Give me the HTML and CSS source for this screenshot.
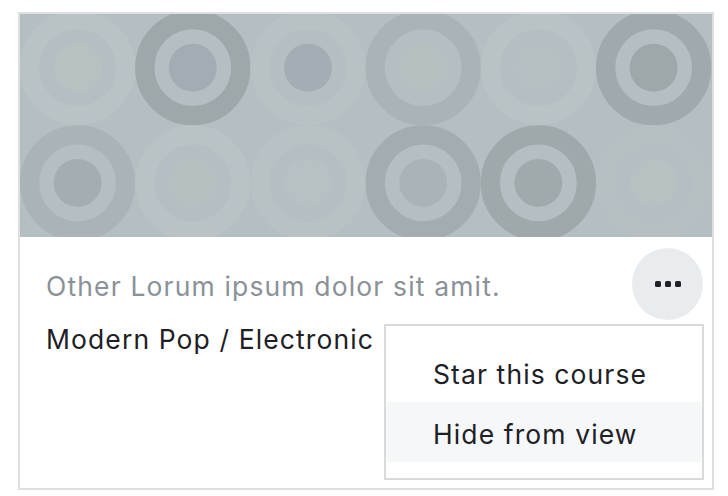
FILE: index.html
```html
<!DOCTYPE html>
<html lang="en">
<head>
<meta charset="utf-8">
<title>Course card</title>
<link rel="stylesheet" href="styles.css">
</head>
<body>
<div class="card">
  <svg class="card-img" viewBox="0 0 692 223" width="692" height="223" aria-hidden="true">
    <rect width="692" height="223" fill="#b4bfc3"/>
    <g fill="none" stroke-width="19.2">
      <circle cx="57.6" cy="53.7" r="48" stroke="#b9c2c5"/>
      <circle cx="172.8" cy="53.7" r="48" stroke="#9ea8ab"/>
      <circle cx="288" cy="53.7" r="48" stroke="#b8c1c4"/>
      <circle cx="403.2" cy="53.7" r="48" stroke="#aab4b8"/>
      <circle cx="518.4" cy="53.7" r="48" stroke="#b9c2c4"/>
      <circle cx="633.6" cy="53.7" r="48" stroke="#a0a9ad"/>
      <circle cx="57.6" cy="168.9" r="48" stroke="#aab4b8"/>
      <circle cx="172.8" cy="168.9" r="48" stroke="#b9c2c5"/>
      <circle cx="288" cy="168.9" r="48" stroke="#b8c1c4"/>
      <circle cx="403.2" cy="168.9" r="48" stroke="#a3acb0"/>
      <circle cx="518.4" cy="168.9" r="48" stroke="#9fa9ac"/>
      <circle cx="633.6" cy="168.9" r="48" stroke="#b6c0c3"/>
    </g>
    <g>
      <circle cx="57.6" cy="53.7" r="24" fill="#b8c1c2"/>
      <circle cx="172.8" cy="53.7" r="24" fill="#a3acb2"/>
      <circle cx="288" cy="53.7" r="24" fill="#a4adb3"/>
      <circle cx="403.2" cy="53.7" r="24" fill="#b7c0c1"/>
      <circle cx="518.4" cy="53.7" r="24" fill="#b6bfc2"/>
      <circle cx="633.6" cy="53.7" r="24" fill="#9ea7aa"/>
      <circle cx="57.6" cy="168.9" r="24" fill="#a4adb2"/>
      <circle cx="172.8" cy="168.9" r="24" fill="#b7c0c1"/>
      <circle cx="288" cy="168.9" r="24" fill="#b7c1c3"/>
      <circle cx="403.2" cy="168.9" r="24" fill="#aab4b8"/>
      <circle cx="518.4" cy="168.9" r="24" fill="#a0a9ac"/>
      <circle cx="633.6" cy="168.9" r="24" fill="#b8c1c1"/>
    </g>
  </svg>
  <div class="card-body">
    <div class="title-row">
      <div class="category">Other Lorum ipsum dolor sit amit.</div>
      <div class="menu-wrap">
        <button class="more-btn" type="button" aria-label="Actions">
          <svg width="26" height="6" viewBox="0 0 26 6" aria-hidden="true">
            <rect x="0" y="0" width="6" height="6" rx="1.5" fill="#1d2125"/>
            <rect x="10" y="0" width="6" height="6" rx="1.5" fill="#1d2125"/>
            <rect x="20" y="0" width="6" height="6" rx="1.5" fill="#1d2125"/>
          </svg>
        </button>
        <ul class="dropdown">
          <li class="dropdown-item">Star this course</li>
          <li class="dropdown-item active">Hide from view</li>
        </ul>
      </div>
    </div>
    <div class="course-name">Modern Pop / Electronic</div>
  </div>
</div>
</body>
</html>
```

FILE: styles.css
```css
* {
  box-sizing: border-box;
}

body {
  margin: 0;
  background: #ffffff;
  font-family: Inter, "Liberation Sans", sans-serif;
}

.card {
  margin: 12px 0 0 18px;
  width: 696px;
  height: 478px;
  border: 2px solid #dfdfdf;
  background: #ffffff;
}

.card-img {
  display: block;
}

.card-body {
  padding: 11px 9px 0 26px;
}

.title-row {
  display: flex;
  align-items: center;
  justify-content: space-between;
  height: 72px;
}

.category {
  font-size: 26.5px;
  letter-spacing: 1.15px;
  color: #8a9198;
  margin-top: 4px;
}

.menu-wrap {
  position: relative;
}

.more-btn {
  display: flex;
  align-items: center;
  justify-content: center;
  width: 71px;
  height: 72px;
  border: 0;
  border-radius: 50%;
  background: #e9ecef;
  padding: 0;
}

.dropdown {
  position: absolute;
  top: 76px;
  right: -1px;
  width: 320px;
  margin: 0;
  padding: 16px 0;
  list-style: none;
  border: 2px solid #dadada;
  background: #ffffff;
}

.dropdown-item {
  height: 60px;
  line-height: 56px;
  padding: 4px 0 0 47px;
  font-size: 26.5px;
  letter-spacing: 1.1px;
  color: #1d2125;
}

.dropdown-item.active {
  background: #f6f7f9;
}

.course-name {
  margin-top: 4px;
  font-size: 26.5px;
  letter-spacing: 1.1px;
  line-height: 30px;
  color: #1d2125;
}
```
